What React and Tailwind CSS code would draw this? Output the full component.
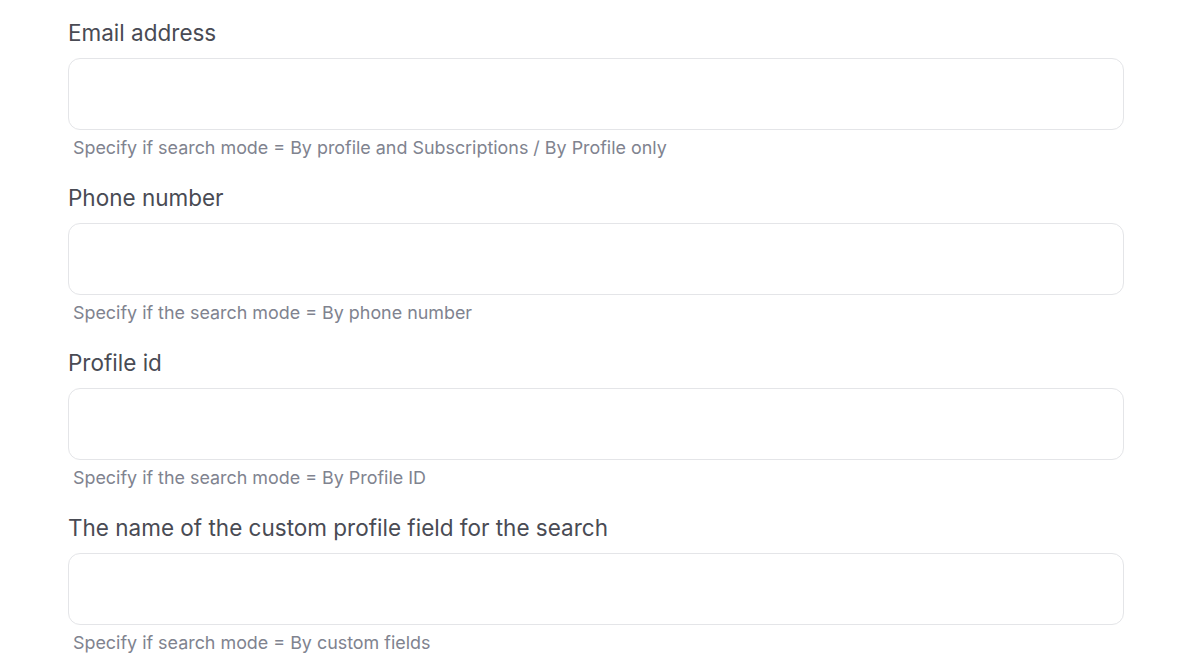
const fields = [
  {
    label: "Email address",
    hint: "Specify if search mode = By profile and Subscriptions / By Profile only",
  },
  { label: "Phone number", hint: "Specify if the search mode = By phone number" },
  { label: "Profile id", hint: "Specify if the search mode = By Profile ID" },
  {
    label: "The name of the custom profile field for the search",
    hint: "Specify if search mode = By custom fields",
  },
];

const Field = ({ label, hint }) => {
  return (
    <div className="flex flex-col">
      <label className="text-[22.5px] leading-[32px] text-[#494b54]">{label}</label>
      <input
        type="text"
        className="mt-[9px] h-[72px] w-full rounded-xl border border-[#e4e5e8] bg-white px-4 text-[18px] text-[#3f4049] outline-none"
      />
      <p className="mt-1 pl-[5px] text-[17.9px] leading-[27px] text-[#80838f]">{hint}</p>
    </div>
  );
};

const App = () => {
  return (
    <div
      className="min-h-screen bg-white"
      style={{ fontFamily: "Inter, 'Noto Sans', sans-serif" }}
    >
      <div className="ml-[68px] flex w-[1056px] flex-col gap-[21px] pt-[17px]">
        {fields.map((f) => (
          <Field key={f.label} label={f.label} hint={f.hint} />
        ))}
      </div>
    </div>
  );
};

export default App;
